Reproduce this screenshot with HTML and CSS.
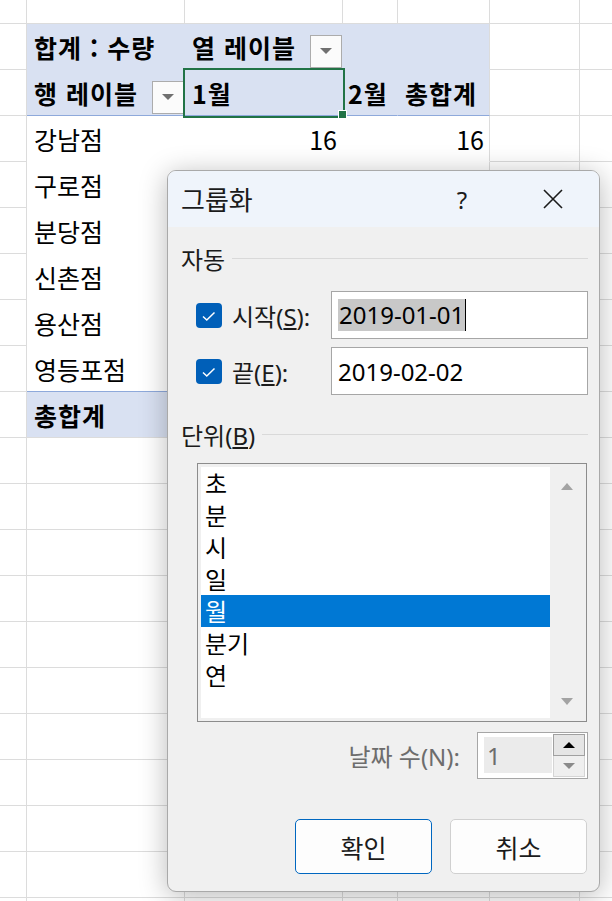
FILE: index.html
```html
<!DOCTYPE html>
<html lang="ko">
<head>
    <meta charset="UTF-8">
    <meta name="viewport" content="width=device-width, initial-scale=1.0">
    <title>그룹화</title>
    <link rel="stylesheet" href="styles.css">
</head>
<body>
    <div class="sheet">
        <!-- Worksheet with the pivot table -->
        <table class="grid">
            <colgroup>
                <col class="c-a"><col class="c-b"><col class="c-c"><col class="c-d"><col class="c-e"><col class="c-f"><col class="c-g">
            </colgroup>
            <tr class="r-top"><td></td><td></td><td></td><td></td><td></td><td></td><td></td></tr>
            <tr>
                <td></td>
                <td class="pv">합계 : 수량</td>
                <td class="pv flush"><div class="hd">열 레이블<span class="dd"></span></div></td>
                <td class="pv"></td>
                <td class="pv edge"></td>
                <td></td><td></td>
            </tr>
            <tr class="pv-line">
                <td></td>
                <td class="pv flush"><div class="hd">행 레이블<span class="dd"></span></div></td>
                <td class="pv active">1월<span class="handle"></span></td>
                <td class="pv">2월</td>
                <td class="pv edge">총합계</td>
                <td></td><td></td>
            </tr>
            <tr><td></td><td class="bd">강남점</td><td class="bd num">16</td><td class="bd"></td><td class="bd edge num">16</td><td></td><td></td></tr>
            <tr><td></td><td class="bd">구로점</td><td class="bd"></td><td class="bd"></td><td class="bd edge"></td><td></td><td></td></tr>
            <tr><td></td><td class="bd">분당점</td><td class="bd"></td><td class="bd"></td><td class="bd edge"></td><td></td><td></td></tr>
            <tr><td></td><td class="bd">신촌점</td><td class="bd"></td><td class="bd"></td><td class="bd edge"></td><td></td><td></td></tr>
            <tr><td></td><td class="bd">용산점</td><td class="bd"></td><td class="bd"></td><td class="bd edge"></td><td></td><td></td></tr>
            <tr class="pv-line"><td></td><td class="bd">영등포점</td><td class="bd"></td><td class="bd"></td><td class="bd edge"></td><td></td><td></td></tr>
            <tr class="total"><td></td><td class="pv">총합계</td><td class="pv"></td><td class="pv"></td><td class="pv edge"></td><td></td><td></td></tr>
            <tr><td></td><td></td><td></td><td></td><td></td><td></td><td></td></tr>
            <tr><td></td><td></td><td></td><td></td><td></td><td></td><td></td></tr>
            <tr><td></td><td></td><td></td><td></td><td></td><td></td><td></td></tr>
            <tr><td></td><td></td><td></td><td></td><td></td><td></td><td></td></tr>
            <tr><td></td><td></td><td></td><td></td><td></td><td></td><td></td></tr>
            <tr><td></td><td></td><td></td><td></td><td></td><td></td><td></td></tr>
            <tr><td></td><td></td><td></td><td></td><td></td><td></td><td></td></tr>
            <tr><td></td><td></td><td></td><td></td><td></td><td></td><td></td></tr>
            <tr><td></td><td></td><td></td><td></td><td></td><td></td><td></td></tr>
            <tr><td></td><td></td><td></td><td></td><td></td><td></td><td></td></tr>
            <tr><td></td><td></td><td></td><td></td><td></td><td></td><td></td></tr>
        </table>

        <!-- Grouping dialog -->
        <div class="dialog">
            <div class="title-bar">
                <span class="title">그룹화</span>
                <span class="help">?</span>
                <span class="close">
                    <svg width="22" height="22" viewBox="0 0 22 22"><path d="M2 2 L20 20 M20 2 L2 20" stroke="#1b1b1b" stroke-width="1.6" fill="none"/></svg>
                </span>
            </div>
            <div class="dlg-body">
                <div class="group-label"><span>자동</span><i class="rule"></i></div>

                <div class="field-row first">
                    <span class="check"><svg width="26" height="25" viewBox="0 0 26 25"><path d="M7 13.5 L10.8 17 L18.5 9.5" stroke="#fff" stroke-width="1.5" fill="none"/></svg></span>
                    <label>시작(<u>S</u>):</label>
                    <div class="text-input"><span class="sel">2019-01-01</span><span class="caret"></span></div>
                </div>
                <div class="field-row">
                    <span class="check"><svg width="26" height="25" viewBox="0 0 26 25"><path d="M7 13.5 L10.8 17 L18.5 9.5" stroke="#fff" stroke-width="1.5" fill="none"/></svg></span>
                    <label>끝(<u>E</u>):</label>
                    <div class="text-input">2019-02-02</div>
                </div>

                <div class="group-label second"><span>단위(<u>B</u>)</span><i class="rule"></i></div>

                <div class="listbox">
                    <ul class="items">
                        <li>초</li>
                        <li>분</li>
                        <li>시</li>
                        <li>일</li>
                        <li class="on">월</li>
                        <li>분기</li>
                        <li>연</li>
                    </ul>
                    <div class="scroll"><span class="arr-up"></span><span class="arr-down"></span></div>
                </div>

                <div class="days-row">
                    <span class="days-label">날짜 수(N):</span>
                    <div class="spin">
                        <div class="spin-field">1</div>
                        <div class="spin-btns">
                            <span class="spin-up"><i></i></span>
                            <span class="spin-dn"><i></i></span>
                        </div>
                    </div>
                </div>

                <div class="buttons">
                    <button class="btn primary">확인</button>
                    <button class="btn">취소</button>
                </div>
            </div>
        </div>
    </div>
</body>
</html>
```

FILE: styles.css
```css
/* General */
body { margin: 0; background: #fff; font-family: "Noto Sans CJK KR", sans-serif; color: #000; }
.sheet { position: relative; width: 612px; height: 901px; overflow: hidden; }

/* Worksheet grid */
.grid { border-collapse: separate; border-spacing: 0; table-layout: fixed; width: 670px; font-size: 25px; }
.c-a { width: 27px; }
.c-b { width: 158px; }
.c-c { width: 158px; }
.c-d { width: 55px; }
.c-e { width: 92px; }
.c-f { width: 90px; }
.c-g { width: 90px; }
.grid td {
    height: 46px;
    box-sizing: border-box;
    padding: 0 6px 0 7px;
    border-right: 1px solid #dcdcdc;
    border-bottom: 1px solid #dcdcdc;
    white-space: nowrap;
    vertical-align: middle;
    line-height: 1.2;
}
.grid .r-top td { height: 24px; }

/* Pivot cells */
.grid td.pv { background: #d9e1f2; font-weight: bold; letter-spacing: 1px; border-right-color: #d9e1f2; border-bottom-color: #d9e1f2; }
.grid td.bd { background: #fff; border-right-color: #fff; border-bottom-color: #fff; }
.grid td.edge { border-right-color: #dcdcdc; }
.grid .pv-line td.pv, .grid .pv-line td.bd { border-bottom-color: #8ea9db; }
.grid .total td.pv { border-bottom-color: #dcdcdc; }
.grid td.num { text-align: right; padding-right: 5px; }
.grid td.flush { padding-right: 0; }
.grid td.pv:nth-child(4) { padding-left: 5px; padding-right: 0; }

.hd { display: flex; align-items: center; justify-content: space-between; }
.dd {
    width: 32px; height: 33px; box-sizing: border-box; margin-top: 9px;
    border: 1px solid #acacac; background: #fbfbfb;
    display: flex; align-items: center; justify-content: center;
}
.dd::after { content: ""; border-left: 6px solid transparent; border-right: 6px solid transparent; border-top: 6px solid #707070; }

.grid td.active { position: relative; outline: 2px solid #217346; }
.handle { position: absolute; right: -5px; bottom: -4px; width: 7px; height: 7px; background: #217346; border: 1px solid #fff; }

/* Dialog */
.dialog {
    position: absolute; left: 167px; top: 170px;
    width: 433px; height: 722px; box-sizing: border-box;
    border: 1px solid #a9a9a9; border-radius: 9px;
    background: #f0f0f0; overflow: hidden;
    box-shadow: 0 4px 28px rgba(0, 0, 0, 0.28);
    font-family: "Noto Sans", "Noto Sans CJK KR", sans-serif; font-size: 24px; color: #1b1b1b;
}
.title-bar { height: 56px; background: #eff4fb; display: flex; align-items: center; padding-left: 13px; }
.title { flex: 1; font-size: 26px; }
.help { width: 20px; text-align: center; margin-right: 58px; }
.close { width: 46px; display: flex; justify-content: center; margin-right: 23px; }

.dlg-body { padding: 0 11px 0 13px; }
.group-label { display: flex; align-items: center; gap: 7px; height: 30px; margin-top: 16px; }
.group-label.second { margin-top: 24px; }
.group-label .rule { flex: 1; height: 1px; background: #d9d9d9; }

.field-row { display: flex; align-items: center; height: 48px; margin-left: 15px; margin-top: 8px; }
.field-row.first { margin-top: 18px; }
.check { width: 26px; height: 25px; border-radius: 4px; background: #005fb8; margin-right: 10px; display: flex; }
.text-input {
    margin-left: auto; width: 257px; height: 48px; box-sizing: border-box;
    border: 1px solid #a6a6a6; background: #fff; padding-left: 6px;
    display: flex; align-items: center; color: #000;
}
.sel { background: #c8c8c8; line-height: 32px; padding: 0 1px; }
.caret { width: 1px; height: 32px; background: #000; }

/* Unit list */
.listbox {
    margin: 14px 1px 0 16px; height: 259px; box-sizing: border-box;
    border: 1px solid #8c8c8c; background: #f0f0f0; padding: 3px;
    display: flex;
}
.items { flex: 1; margin: 0; padding: 0; list-style: none; background: #fff; font-family: "Noto Sans CJK KR", sans-serif; color: #000; }
.items li { height: 32px; line-height: 32px; padding-left: 4px; }
.items li.on { background: #0078d4; color: #fff; }
.scroll { width: 33px; display: flex; flex-direction: column; justify-content: space-between; align-items: center; padding: 16px 0 13px; }
.arr-up { border-left: 6px solid transparent; border-right: 6px solid transparent; border-bottom: 7px solid #a3a3a3; }
.arr-down { border-left: 6px solid transparent; border-right: 6px solid transparent; border-top: 7px solid #a3a3a3; }

/* Number of days */
.days-row { display: flex; justify-content: flex-end; align-items: center; height: 47px; margin-top: 10px; }
.days-label { color: #6d6d6d; margin-right: 17px; }
.spin {
    width: 111px; height: 47px; box-sizing: border-box;
    border: 1px solid #a6a6a6; background: #fff;
    display: flex; padding: 1px 2px 1px 6px;
}
.spin-field { flex: 1; margin: 3px 1px 4px 0; background: #ebebeb; color: #6d6d6d; padding-left: 3px; display: flex; align-items: center; }
.spin-btns { width: 32px; display: flex; flex-direction: column; }
.spin-btns span { flex: 1; box-sizing: border-box; display: flex; align-items: center; justify-content: center; }
.spin-up { border: 1px solid #a0a0a0; background: #e5e5e5; }
.spin-dn { border: 1px solid #d5d5d5; border-top: none; background: #efefef; }
.spin-up i { border-left: 6px solid transparent; border-right: 6px solid transparent; border-bottom: 6px solid #000; }
.spin-dn i { border-left: 6px solid transparent; border-right: 6px solid transparent; border-top: 6px solid #8a8a8a; }

/* Buttons */
.buttons { display: flex; justify-content: flex-end; gap: 18px; margin: 40px 1px 0 0; }
.btn {
    width: 137px; height: 55px; border: 1px solid #d0d0d0; border-radius: 5px;
    background: #fdfdfd; font-family: "Noto Sans CJK KR", sans-serif; font-size: 25px; color: #1b1b1b;
}
.btn.primary { border-color: #0067c0; }
```
